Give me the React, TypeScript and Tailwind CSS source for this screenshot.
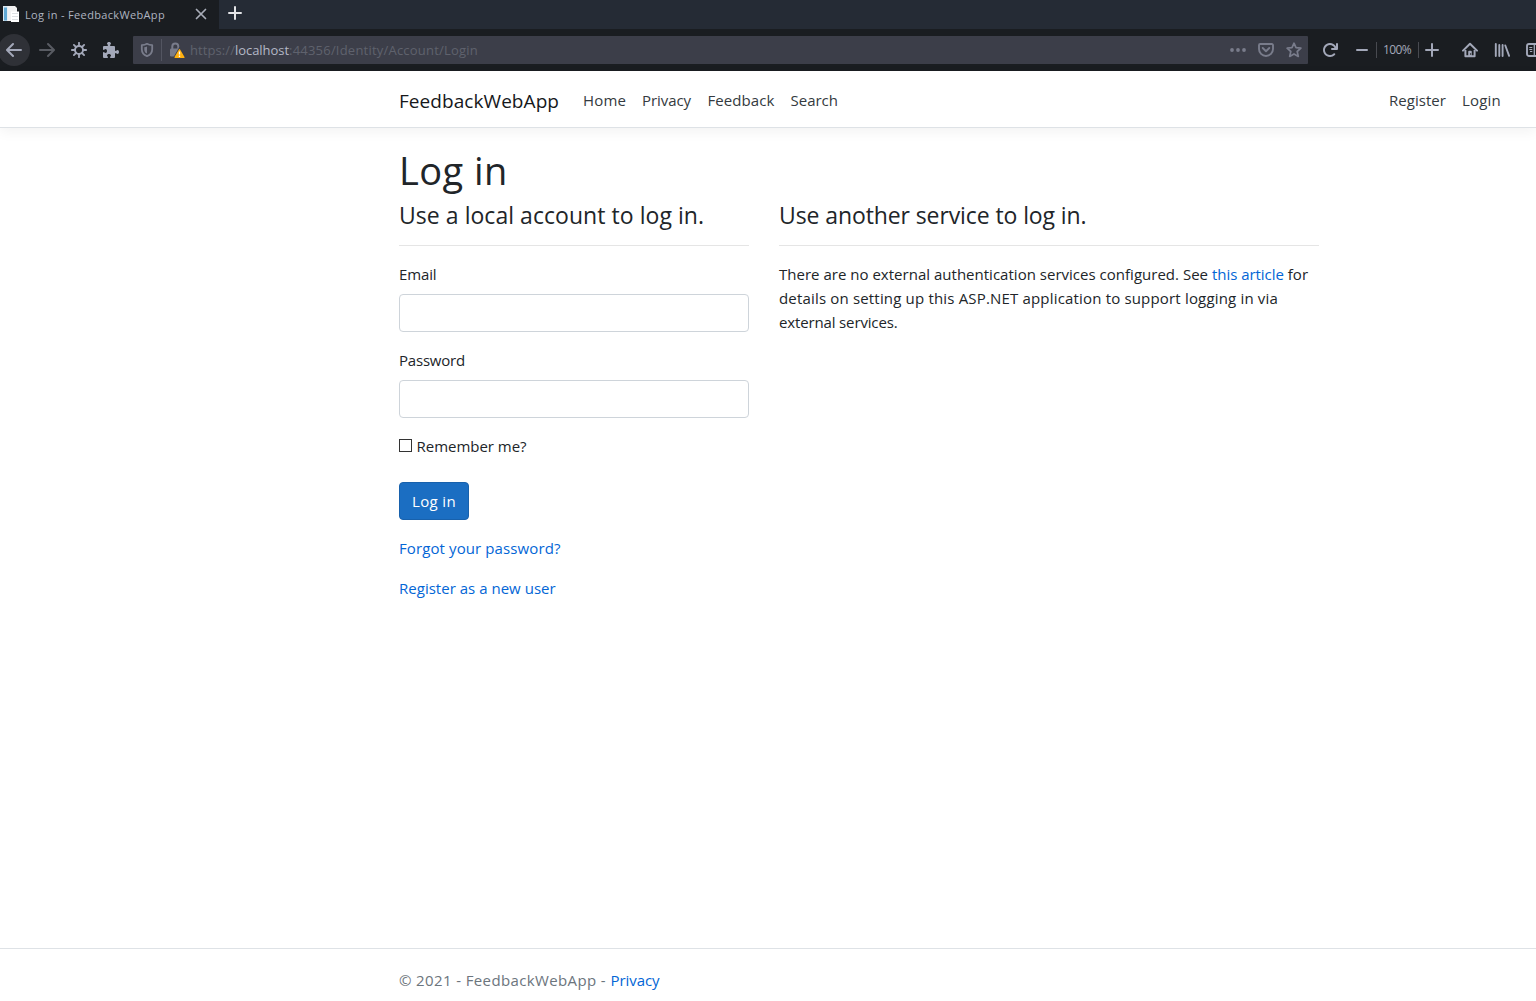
import type { ReactNode } from "react";

function Glyph({ children, className = "", size = 16 }: { children: ReactNode; className?: string; size?: number }) {
  return (
    <svg width={size} height={size} viewBox="0 0 16 16" fill="currentColor" className={`block shrink-0 ${className}`}>
      {children}
    </svg>
  );
}

const BACK_PATH =
  "M15 7H3.414l4.293-4.293a1 1 0 0 0-1.414-1.414l-6 6a1 1 0 0 0 0 1.414l6 6a1 1 0 0 0 1.414-1.414L3.414 9H15a1 1 0 0 0 0-2z";

function TabStrip() {
  return (
    <div className="flex h-[29px] bg-[#252b35]">
      <div className="flex w-[219px] items-center bg-[#1a1d21] pl-[3px]">
        <svg width="16" height="16" viewBox="0 0 16 16" className="mb-px block shrink-0">
          <path d="M0 0h9v15H0z" fill="#dde9f1" />
          <path d="M1 1.500h3v13H1z" fill="#62a9d4" />
          <path d="M4.500 0H12l2 2v13H4.500z" fill="#f1f1f1" />
          <path d="M8 5.500h8V16H8z" fill="#fff" />
          <path d="M9 7.500h6M9 10.500h6M9 13.500h6" stroke="#dcdfe2" strokeWidth="1" />
        </svg>
        <span className="ml-[6px] w-[160px] pt-[2px] text-[11px] tracking-[0.344px] text-[#aeb4c0]">Log in - FeedbackWebApp</span>
        <svg width="12" height="12" viewBox="0 0 12 12" className="mb-px ml-[10px] block" stroke="#a9adb8" strokeWidth="1.700" strokeLinecap="round">
          <path d="M1.500 1.500l9 9M10.500 1.500l-9 9" />
        </svg>
      </div>
      <svg width="14" height="14" viewBox="0 0 14 14" className="mt-[6px] ml-[9px] block" stroke="#e3e4e7" strokeWidth="2" strokeLinecap="round">
        <path d="M7 1v12M1 7h12" />
      </svg>
    </div>
  );
}

function AddressBar() {
  return (
    <div className="ml-[14px] flex h-7 w-[1175px] shrink-0 items-center rounded-[1px] bg-[#3c3e49] pl-[6px] text-[#797c8b]">
      <Glyph>
        <path d="M8 1.800c-1.700 1-3.500 1.300-5.200 1.300v4.200c0 3.200 2 5.700 5.200 6.900 3.200-1.200 5.200-3.700 5.200-6.900V3.100C11.500 3.100 9.700 2.800 8 1.800z" fill="none" stroke="currentColor" strokeWidth="1.800" strokeLinejoin="round" />
        <path d="M8 4.600v7c-1.800-.9-2.700-2.400-2.700-4.200V5.200C6.300 5.100 7.200 4.900 8 4.600z" />
      </Glyph>
      <div className="ml-[6px] h-[22px] w-px bg-[#535561]" />
      <svg width="16" height="16" viewBox="0 0 16 16" className="ml-[7px] block shrink-0">
        <path d="M3.300 7V4.600a3 3 0 0 1 6 0V7" fill="none" stroke="#797c8b" strokeWidth="2" />
        <rect x="1" y="6.500" width="10.500" height="8" rx="1.200" fill="#797c8b" />
        <path d="M10.500 6.300l5.300 9.200H5.200z" fill="#3c3e49" stroke="#3c3e49" strokeWidth="1.500" />
        <path d="M10.500 7.800l4.400 7.500H6.100z" fill="#ffb00f" stroke="#ffb00f" strokeWidth="1.400" strokeLinejoin="round" />
        <path d="M10.500 9.500v3M10.500 13.600v1.300" stroke="#fff" strokeWidth="1.300" />
      </svg>
      <div className="ml-[5px] flex pt-[2px] text-[13px] text-[#5f626d]">
        <span className="tracking-[0.083px]">https://</span>
        <span className="tracking-[-0.051px] text-[#b4b8c6]">localhost</span>
        <span className="tracking-[0.214px]">:44356/Identity/Account/Login</span>
      </div>
      <div className="mr-[6px] ml-auto flex gap-3">
        <Glyph>
          <circle cx="2" cy="8" r="1.900" />
          <circle cx="8" cy="8" r="1.900" />
          <circle cx="14" cy="8" r="1.900" />
        </Glyph>
        <Glyph>
          <path d="M2.200 2h11.600a1.200 1.200 0 0 1 1.200 1.200V7A7 7 0 0 1 1 7V3.200A1.200 1.200 0 0 1 2.200 2z" fill="none" stroke="currentColor" strokeWidth="1.900" />
          <path d="M4.700 6l3.300 3.200L11.300 6" fill="none" stroke="currentColor" strokeWidth="1.900" strokeLinecap="round" strokeLinejoin="round" />
        </Glyph>
        <Glyph>
          <path d="M8 1.200l2 4.500 4.900.5-3.700 3.300 1.100 4.900L8 11.900l-4.300 2.500 1.100-4.900L1.100 6.200 6 5.700z" fill="none" stroke="currentColor" strokeWidth="1.700" strokeLinejoin="round" />
        </Glyph>
      </div>
    </div>
  );
}

function Toolbar() {
  return (
    <div className="flex h-[42px] items-center overflow-hidden bg-[#1a1d21] text-[#a3a8b9]">
      <div className="-ml-[2px] flex h-8 w-8 shrink-0 items-center justify-center rounded-full bg-[#2f3137]">
        <Glyph>
          <path d={BACK_PATH} />
        </Glyph>
      </div>
      <Glyph className="ml-[9px] -scale-x-100 text-[#585b62]">
        <path d={BACK_PATH} />
      </Glyph>
      <Glyph className="ml-[16px]">
        <circle cx="8" cy="8" r="4" fill="none" stroke="currentColor" strokeWidth="1.900" />
        <path d="M8 .8v3M8 12.200v3M.8 8h3M12.200 8h3M2.900 2.900L5 5M11 11l2.100 2.100M13.100 2.900L11 5M5 11l-2.100 2.100" stroke="currentColor" strokeWidth="1.800" strokeLinecap="round" />
      </Glyph>
      <Glyph className="ml-[16px]">
        <path d="M14.500 8c-.971 0-1 1-1.750 1a.765.765 0 0 1-.75-.75V5a1 1 0 0 0-1-1H7.750A.765.765 0 0 1 7 3.250c0-.75 1-.779 1-1.750C8 .635 7.100 0 6 0S4 .635 4 1.500c0 .971 1 1 1 1.750a.765.765 0 0 1-.75.75H1a1 1 0 0 0-1 1v2.250A.765.765 0 0 0 .75 8c.75 0 .779-1 1.750-1C3.365 7 4 7.900 4 9s-.635 2-1.500 2c-.971 0-1-1-1.750-1a.765.765 0 0 0-.75.75V15a1 1 0 0 0 1 1h3.250a.765.765 0 0 0 .75-.75c0-.75-1-.779-1-1.750 0-.865.900-1.500 2-1.500s2 .635 2 1.500c0 .971-1 1-1 1.750a.765.765 0 0 0 .75.75H11a1 1 0 0 0 1-1v-3.250a.765.765 0 0 1 .75-.75c.75 0 .779 1 1.750 1 .865 0 1.500-.9 1.500-2s-.635-2-1.500-2z" />
      </Glyph>
      <AddressBar />
      <Glyph className="ml-[14px]">
        <path d="M15 1a1 1 0 0 0-1 1v2.418A6.995 6.995 0 1 0 8 15a6.954 6.954 0 0 0 4.950-2.050 1 1 0 0 0-1.414-1.414A5.019 5.019 0 1 1 12.549 6H10a1 1 0 0 0 0 2h5a1 1 0 0 0 1-1V2a1 1 0 0 0-1-1z" />
      </Glyph>
      <div className="ml-[18px] h-[2px] w-3 shrink-0 rounded-full bg-[#a3a8b9]" />
      <div className="ml-[8px] h-4 w-px shrink-0 bg-[#484a50]" />
      <span className="ml-[6px] w-[29px] shrink-0 text-[12px] tracking-[-0.626px] text-[#a3a8b9]">100%</span>
      <div className="ml-[6px] h-4 w-px shrink-0 bg-[#484a50]" />
      <Glyph className="ml-[5px]">
        <path d="M8 2v12M2 8h12" stroke="currentColor" strokeWidth="2" strokeLinecap="round" />
      </Glyph>
      <Glyph className="ml-[22px]">
        <path d="M1 8.600L8 1.700l7 6.900" fill="none" stroke="currentColor" strokeWidth="2" strokeLinecap="round" strokeLinejoin="round" />
        <path d="M3.400 8v6.200h9.200V8" fill="none" stroke="currentColor" strokeWidth="2" strokeLinejoin="round" />
        <path d="M6.200 14.500V9.700a1 1 0 0 1 1-1h1.600a1 1 0 0 1 1 1v4.800z" />
        <circle cx="8.600" cy="12" r=".7" fill="#1b1d21" />
      </Glyph>
      <Glyph className="ml-[16px]">
        <path d="M1.800 2v12M5.300 3v11M8.600 3v11M11.300 3.500l3.800 10.300" stroke="currentColor" strokeWidth="1.900" strokeLinecap="round" />
      </Glyph>
      <Glyph className="ml-[16px]">
        <rect x="1" y="2" width="14" height="12" rx="2" fill="none" stroke="currentColor" strokeWidth="1.900" />
        <path d="M8.300 2v12" stroke="currentColor" strokeWidth="1.300" />
        <path d="M3.300 5.500h3M3.300 7.500h3M4 9.500h2.300" stroke="currentColor" strokeWidth="1" />
      </Glyph>
    </div>
  );
}

function SiteHeader() {
  return (
    <nav className="flex h-[57px] items-center border-b border-[#dee2e6] bg-white pt-px pr-[35px] pl-[399px] text-[#343a40] shadow-[0_4px_12px_rgba(0,0,0,0.05)]">
      <a className="mr-6 w-[160px] pt-[2px] text-[19px] leading-[30px] tracking-[0.062px] text-[#16181b]">FeedbackWebApp</a>
      <div className="flex gap-4 leading-6">
        <a className="w-[43px] tracking-[0.152px]">Home</a>
        <a className="w-[49.500px] tracking-[-0.067px]">Privacy</a>
        <a className="w-[67px] tracking-[0.082px]">Feedback</a>
        <a>Search</a>
      </div>
      <div className="ml-auto flex gap-4 leading-6">
        <a className="w-[57px] tracking-[0.042px]">Register</a>
        <a className="w-[39px] tracking-[0.203px]">Login</a>
      </div>
    </nav>
  );
}

function Field({ label, type, tracking }: { label: string; type: string; tracking: string }) {
  return (
    <label className="mb-4 block">
      <span className={`mb-2 block leading-6 ${tracking}`}>{label}</span>
      <input type={type} className="block h-[38px] w-full rounded-[4px] border border-[#ced4da] bg-white px-3" />
    </label>
  );
}

export default function App() {
  return (
    <div className="flex h-[1001px] w-[1536px] flex-col overflow-hidden bg-white font-['Open_Sans',sans-serif] text-[15px] text-[#212529]">
      <header>
        <TabStrip />
        <Toolbar />
      </header>
      <SiteHeader />
      <main className="flex-1 pt-[18px] pl-[399px]">
        <h1 className="mb-[7px] text-[38px] leading-[48px] tracking-[0.450px]">Log in</h1>
        <div className="flex gap-[30px]">
          <section className="w-[350px]">
            <h4 className="text-[23px] leading-[28.800px] tracking-[0.044px]">Use a local account to log in.</h4>
            <hr className="mt-[15px] mb-4 border-[#e5e5e5]" />
            <form>
              <Field label="Email" type="email" tracking="tracking-[-0.126px]" />
              <Field label="Password" type="password" tracking="tracking-[-0.201px]" />
              <label className="mb-6 flex leading-6">
                <input type="checkbox" className="mt-[5px] mr-[4.500px] h-[13px] w-[13px] appearance-none border border-[#333] bg-white" />
                <span className="tracking-[-0.024px]">Remember me?</span>
              </label>
              <button type="button" className="mb-4 block h-[38px] w-[70px] rounded-[4px] border border-[#1861ac] bg-[#1b6ec2] text-left leading-6 tracking-[0.353px] text-white">
                <span className="ml-3">Log in</span>
              </button>
              <p className="mb-4 leading-6 tracking-[0.104px] text-[#0366d6]">Forgot your password?</p>
              <p className="leading-6 tracking-[0.020px] text-[#0366d6]">Register as a new user</p>
            </form>
          </section>
          <section className="w-[540px]">
            <h4 className="text-[23px] leading-[28.800px] tracking-[-0.099px]">Use another service to log in.</h4>
            <hr className="mt-[15px] mb-4 border-[#e5e5e5]" />
            <p className="leading-6 whitespace-nowrap">
              <span className="tracking-[0.015px]">There are no external authentication services configured. See </span>
              <a className="tracking-[-0.031px] text-[#0366d6]">this article</a> for
              <br />
              <span className="tracking-[0.174px]">details on setting up this ASP.NET application to support logging in via</span>
              <br />
              <span className="tracking-[-0.143px]">external services.</span>
            </p>
          </section>
        </div>
      </main>
      <footer className="flex h-[53px] border-t border-[#dee2e6] pt-[19px] pl-[399px] leading-6 text-[#6c757d]">
        <span className="w-[211.500px] tracking-[0.374px]">© 2021 - FeedbackWebApp -</span>
        <a className="tracking-[-0.067px] text-[#0366d6]">Privacy</a>
      </footer>
    </div>
  );
}
